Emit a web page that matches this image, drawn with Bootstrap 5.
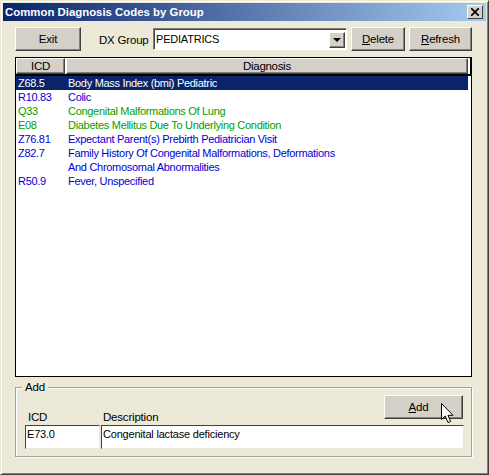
<!DOCTYPE html>
<html lang="en"><head><meta charset="utf-8"><title>Common Diagnosis Codes by Group</title>
<link href="https://cdn.jsdelivr.net/npm/bootstrap@5.3.0/dist/css/bootstrap.min.css" rel="stylesheet">
<style>
html,body{margin:0;width:489px;height:475px;overflow:hidden;background:#ece9d8}
body{font:11px/14px "Liberation Sans",Arial,sans-serif;color:#000;letter-spacing:-.2px}
.win{width:489px;height:475px;background:#ece9d8;border:1px solid;border-color:#ece9d8 #404040 #404040 #ece9d8;box-shadow:inset 1px 1px 0 #fff,inset -1px -1px 0 #808080;padding:2px 2px;position:relative}
.ttl{height:18px;background:linear-gradient(90deg,#0a246a,#a6caf0);color:#fff;font-weight:700;font-size:11.4px;letter-spacing:0;padding:0 3px 0 2px}
.xbtn{width:16px;height:14px;background:#d4d0c8;border:1px solid;border-color:#fff #404040 #404040 #fff;padding:0}
.bar{padding:6px 0 0 12px;height:36px}
.wbtn{height:24px;background:#d4d0c8;border:1px solid;border-color:#fff #404040 #404040 #fff;box-shadow:inset -1px -1px 0 #808080;padding:0;color:#000;font-size:11.5px;letter-spacing:-.2px;line-height:14px;border-radius:0}
.w-exit{width:66px;margin-right:18px}.w-del{width:54px;margin-left:4px}.w-ref{width:63px;margin-left:4px}
.dxl{width:54px;flex:none;padding-top:6px;font-size:11.5px;white-space:nowrap}
.combo{width:194px;height:22px;margin-top:1px;background:#fff;border:1px solid;border-color:#808080 #fff #fff #808080;box-shadow:inset 1px 1px 0 #404040;padding:1px 1px 1px 2px}
.combo-t{padding-top:2px;font-size:11px}
.arr{width:16px;height:16px;margin-top:2px;background:#d4d0c8;border:1px solid;border-color:#fff #404040 #404040 #fff;box-shadow:inset -1px -1px 0 #808080}
.tri{width:0;height:0;border:4px solid transparent;border-top:4px solid #000;border-bottom:0}
.grd{margin:0 0 0 12px;width:457px;height:320px;background:#fff;border:1px solid #000;overflow:hidden;letter-spacing:-.3px}
.hdr{height:18px;border-bottom:2px solid #000}
.hc{background:#d4d0c8;border:1px solid;border-color:#fff #404040 #404040 #fff;box-shadow:inset -1px -1px 0 #808080;height:16px;text-align:center;line-height:14px;font-size:11.5px}
.hc1{width:49px;margin-right:1px}.hc2{width:403px;margin-right:2px}
.sep{width:1px;background:#000;height:16px}
.rw{min-height:14px}.c1{width:52px;padding-left:2px;flex:none}.c2{width:398px}
.sel{background:#0a246a;color:#fff;margin-right:3px}.blu{color:#0000d8}.grn{color:#00a000}
.gbx{margin:10px 0 0 12px;width:457px;height:70px;border:1px solid #a0a0a0;box-shadow:1px 1px 0 #fff,inset 1px 1px 0 #fff;position:relative;padding:7px 7px 0 9px}
.lgd{position:absolute;left:6px;top:-8px;background:#ece9d8;padding:0 3px;height:14px;font-size:11.5px}
.addrow{height:24px;justify-content:flex-end}
.w-add{width:79px;margin-right:1px;text-align:center;padding-right:10px}
.lbls{height:15px;margin-top:-9px;font-size:11.5px}.l1{width:78px;padding-left:3px}
.fld{height:24px;background:#fff;border:1px solid;border-color:#404040 #ece9d8 #ece9d8 #404040;padding:1px 1px;line-height:14px}
.f1{width:75px}.f2{width:363px;margin-left:1px}
.curs{position:absolute;left:440px;top:402px;z-index:3}
</style></head><body>
<div class="win">
 <div class="ttl d-flex align-items-center justify-content-between">
  <span>Common Diagnosis Codes by Group</span>
  <button class="xbtn d-flex align-items-center justify-content-center" aria-label="Close"><svg width="8" height="8" viewBox="0 0 8 8"><path d="M0 0L8 8M8 0L0 8" stroke="#000" stroke-width="1.6"/></svg></button>
 </div>
 <div class="bar d-flex align-items-start">
  <button class="wbtn w-exit">Exit</button>
  <span class="dxl">DX Group</span>
  <div class="combo d-flex justify-content-between"><span class="combo-t">PEDIATRICS</span><span class="arr d-flex align-items-center justify-content-center"><span class="tri"></span></span></div>
  <button class="wbtn w-del"><u>D</u>elete</button>
  <button class="wbtn w-ref"><u>R</u>efresh</button>
 </div>
 <div class="grd">
  <div class="hdr d-flex"><div class="hc hc1">ICD</div><div class="hc hc2">Diagnosis</div><div class="sep"></div></div>
  <div class="rw d-flex sel"><div class="c1">Z68.5</div><div class="c2">Body Mass Index (bmi) Pediatric</div></div>
  <div class="rw d-flex blu"><div class="c1">R10.83</div><div class="c2">Colic</div></div>
  <div class="rw d-flex grn"><div class="c1">Q33</div><div class="c2">Congenital Malformations Of Lung</div></div>
  <div class="rw d-flex grn"><div class="c1">E08</div><div class="c2">Diabetes Mellitus Due To Underlying Condition</div></div>
  <div class="rw d-flex blu"><div class="c1">Z76.81</div><div class="c2">Expectant Parent(s) Prebirth Pediatrician Visit</div></div>
  <div class="rw d-flex blu"><div class="c1">Z82.7</div><div class="c2">Family History Of Congenital Malformations, Deformations<br>And Chromosomal Abnormalities</div></div>
  <div class="rw d-flex blu"><div class="c1">R50.9</div><div class="c2">Fever, Unspecified</div></div>
 </div>
 <div class="gbx">
  <span class="lgd">Add</span>
  <div class="addrow d-flex"><button class="wbtn w-add"><u>A</u>dd</button></div>
  <div class="lbls d-flex"><div class="l1">ICD</div><div>Description</div></div>
  <div class="d-flex"><div class="fld f1">E73.0</div><div class="fld f2">Congenital lactase deficiency</div></div>
 </div>
 <svg class="curs" width="13" height="21" viewBox="0 0 13 21"><path d="M.5.5V16.5L4.2 13 7 19.5 9.6 18.4 7 12.3H12Z" fill="#fff" stroke="#000"/></svg>
</div>
</body></html>
